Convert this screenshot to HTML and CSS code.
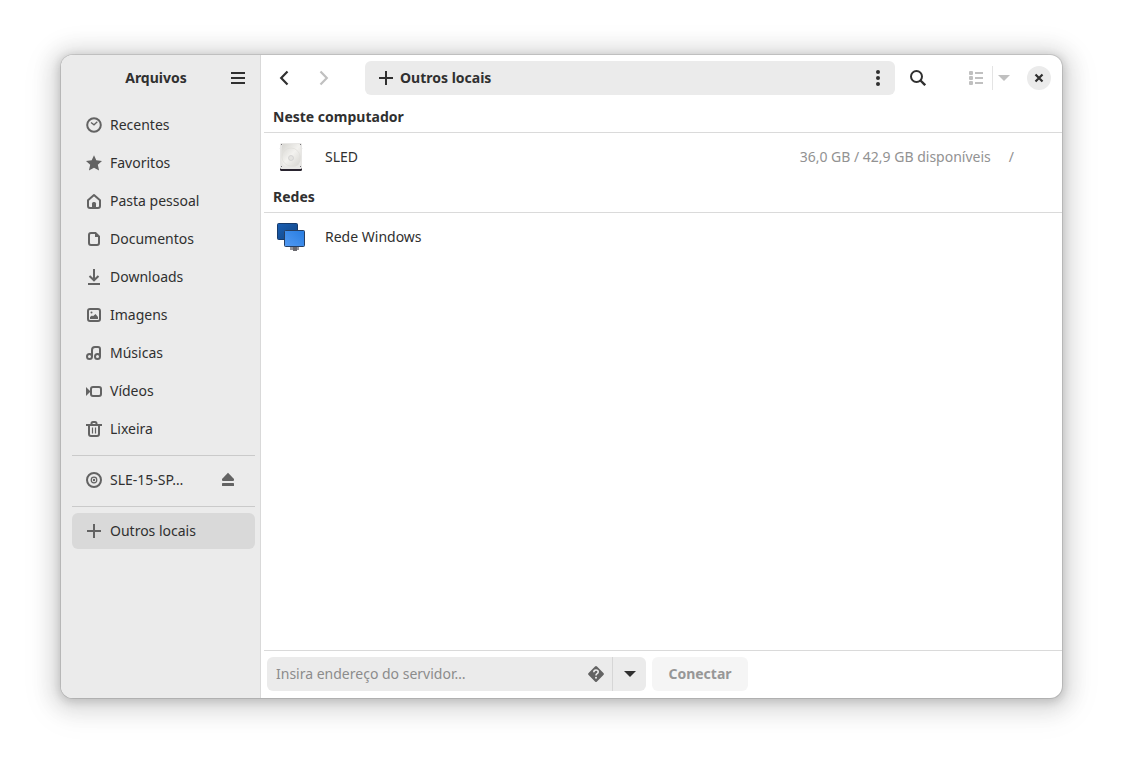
FILE: index.html
```
<!DOCTYPE html>
<html lang="pt-BR">
  <head>
    <meta charset="UTF-8" />
    <meta name="viewport" content="width=device-width, initial-scale=1.0" />
    <title>Arquivos</title>
    <link rel="stylesheet" href="styles.css">
  </head>
  <body>
    <div class="window">
      <!-- Barra lateral -->
      <aside class="sidebar">
        <header class="sidebar-header">
          <h1>Arquivos</h1>
          <button class="icon-btn" aria-label="Menu">
            <svg width="16" height="16" viewBox="0 0 16 16"><path d="M1 3h14M1 8h14M1 13h14" stroke="currentColor" stroke-width="2" /></svg>
          </button>
        </header>
        <nav>
          <ul class="places">
            <li><a href="#">
              <svg width="16" height="16" viewBox="0 0 16 16" fill="none" stroke="currentColor"><circle cx="8" cy="8" r="6.800" stroke-width="2" /><path d="M5 5.500l3 2.300 3.300-3" stroke-width="1.300" /></svg>
              <span>Recentes</span>
            </a></li>
            <li><a href="#">
              <svg width="16" height="16" viewBox="0 0 16 16" fill="currentColor"><path d="M8 .2l2.300 5.100 5.700.6-4.200 3.900 1.300 5.800L8 12.700l-5.100 2.900 1.300-5.800L0 5.900l5.700-.6z" /></svg>
              <span>Favoritos</span>
            </a></li>
            <li><a href="#">
              <svg width="16" height="16" viewBox="0 0 16 16" fill="none" stroke="currentColor" stroke-width="2" stroke-linejoin="round"><path d="M2 7.200L8 2l6 5.200V13q0 2-2 2H4q-2 0-2-2z" /><path d="M6 14v-3.500q0-1.500 1.500-1.500h1q1.500 0 1.500 1.500V14z" fill="currentColor" stroke="none" /></svg>
              <span>Pasta pessoal</span>
            </a></li>
            <li><a href="#">
              <svg width="16" height="16" viewBox="0 0 16 16"><path d="M5 2h4.500L13 5.500V12q0 2-2 2H5q-2 0-2-2V4q0-2 2-2z" fill="none" stroke="currentColor" stroke-width="2" /><path d="M9 2v4h4z" fill="currentColor" /></svg>
              <span>Documentos</span>
            </a></li>
            <li><a href="#">
              <svg width="16" height="16" viewBox="0 0 16 16" fill="none" stroke="currentColor" stroke-width="2"><path d="M8 0v11M3.500 7L8 11.300 12.500 7M2 15h12" /></svg>
              <span>Downloads</span>
            </a></li>
            <li><a href="#">
              <svg width="16" height="16" viewBox="0 0 16 16"><rect x="2" y="2" width="12" height="12" rx="2" fill="none" stroke="currentColor" stroke-width="2" /><path d="M4 12v-2l2-1.500 1 .8L9.500 7 12 10v2z" fill="currentColor" /><circle cx="5.500" cy="5.500" r="1" fill="currentColor" /></svg>
              <span>Imagens</span>
            </a></li>
            <li><a href="#">
              <svg width="16" height="16" viewBox="0 0 16 16" fill="none" stroke="currentColor" stroke-width="2"><circle cx="3.500" cy="11.500" r="2.500" /><circle cx="11.500" cy="11.500" r="2.500" /><path d="M6 11.500V5q0-3 3-3h3q2 0 2 2v7.500" /></svg>
              <span>Músicas</span>
            </a></li>
            <li><a href="#">
              <svg width="16" height="16" viewBox="0 0 16 16"><rect x="5" y="4" width="10" height="9" rx="2" fill="none" stroke="currentColor" stroke-width="2" /><path d="M0 4l4.500 4.500L0 13z" fill="currentColor" /></svg>
              <span>Vídeos</span>
            </a></li>
            <li><a href="#">
              <svg width="16" height="16" viewBox="0 0 16 16" fill="none" stroke="currentColor"><path d="M0 4h16M5.500 4V2.500q0-1.500 1.500-1.500h2q1.500 0 1.500 1.500V4M3 4v9q0 2 2 2h6q2 0 2-2V4" stroke-width="2" /><path d="M6.500 6.500v6M9.500 6.500v6" stroke-width="1.200" /></svg>
              <span>Lixeira</span>
            </a></li>
            <li class="separator"></li>
            <li class="mount">
              <a href="#">
                <svg width="16" height="16" viewBox="0 0 16 16" fill="none" stroke="currentColor"><circle cx="8" cy="8" r="7" stroke-width="2" /><circle cx="8" cy="8" r="2.800" stroke-width="1.200" /><circle cx="8" cy="8" r="1.200" fill="currentColor" stroke="none" /></svg>
                <span>SLE-15-SP…</span>
              </a>
              <button class="eject" aria-label="Ejetar">
                <svg width="16" height="16" viewBox="0 0 16 16" fill="currentColor"><path d="M8 .8L14 7v1q0 1-1 1H3q-1 0-1-1V7z" /><rect x="2" y="11" width="12" height="3" rx=".6" /></svg>
              </button>
            </li>
            <li class="separator"></li>
            <li><a href="#" class="active">
              <svg width="16" height="16" viewBox="0 0 16 16"><path d="M8 1v14M1 8h14" stroke="currentColor" stroke-width="2" /></svg>
              <span>Outros locais</span>
            </a></li>
          </ul>
        </nav>
      </aside>

      <main class="content">
        <!-- Barra de ferramentas -->
        <header class="toolbar">
          <button class="icon-btn" aria-label="Voltar">
            <svg width="16" height="16" viewBox="0 0 16 16"><path d="M11.500 1.500L5.200 8l6.300 6.500" fill="none" stroke="currentColor" stroke-width="2.200" /></svg>
          </button>
          <button class="icon-btn" aria-label="Avançar" disabled>
            <svg width="16" height="16" viewBox="0 0 16 16"><path d="M4.500 1.500L10.800 8l-6.300 6.500" fill="none" stroke="currentColor" stroke-width="2.200" /></svg>
          </button>
          <div class="pathbar">
            <svg width="16" height="16" viewBox="0 0 16 16"><path d="M8 1v14M1 8h14" stroke="currentColor" stroke-width="2" /></svg>
            <span>Outros locais</span>
            <button class="icon-btn" aria-label="Mais opções">
              <svg width="16" height="16" viewBox="0 0 16 16" fill="currentColor"><circle cx="8" cy="2" r="2" /><circle cx="8" cy="8" r="2" /><circle cx="8" cy="14" r="2" /></svg>
            </button>
          </div>
          <button class="icon-btn" aria-label="Pesquisar">
            <svg width="16" height="16" viewBox="0 0 16 16" fill="none" stroke="currentColor"><circle cx="6.500" cy="6.500" r="5.500" stroke-width="2" /><path d="M10.500 10.500l4.700 4.700" stroke-width="2.400" /></svg>
          </button>
          <div class="view-switch">
            <button class="view-list" aria-label="Exibir em lista" disabled>
              <svg width="16" height="16" viewBox="0 0 16 16" fill="currentColor"><rect x="1" y="1" width="4" height="4" rx="1" /><rect x="1" y="6" width="4" height="4" rx="1" /><rect x="1" y="11" width="4" height="4" rx="1" /><path d="M7 2h8v2H7zM7 7h8v2H7zM7 12h8v2H7z" /></svg>
            </button>
            <button class="view-menu" aria-label="Opções de exibição" disabled>
              <svg width="12" height="6" viewBox="0 0 12 6" fill="currentColor"><path d="M0 0h12L6 6z" /></svg>
            </button>
          </div>
          <button class="close" aria-label="Fechar">
            <svg width="10" height="10" viewBox="0 0 10 10"><path d="M1.500 1.500l7 7M8.500 1.500l-7 7" stroke="currentColor" stroke-width="2.200" /></svg>
          </button>
        </header>

        <!-- Locais -->
        <section class="locations">
          <h2>Neste computador</h2>
          <a href="#" class="location">
            <svg width="32" height="32" viewBox="0 0 32 32">
              <defs>
                <linearGradient id="disk" x1="0" y1="0" x2="1" y2="1">
                  <stop offset="0" stop-color="#d4d3cf" />
                  <stop offset=".5" stop-color="#f3f2ef" />
                  <stop offset="1" stop-color="#d3d2ce" />
                </linearGradient>
              </defs>
              <rect x="5" y="6" width="22" height="24" rx="1.500" fill="#29242f" />
              <rect x="5" y="2" width="22" height="26" rx="1.500" fill="#e8e7e5" />
              <path d="M8 3h16q1 0 1 2l1 11q0 10-10 10T6 16L7 5q0-2 1-2z" fill="url(#disk)" />
              <circle cx="16" cy="16" r="9" fill="none" stroke="#dfdeda" stroke-width=".7" />
              <circle cx="16" cy="17" r="2.500" fill="#e5e4e1" stroke="#ccc" stroke-width=".7" />
              <path d="M6 3h1v1H6zM25 3h1v1h-1zM6 25h1v1H6zM25 25h1v1h-1z" fill="#77767b" />
            </svg>
            <span class="name">SLED</span>
            <span class="space">36,0 GB / 42,9 GB disponíveis</span>
            <span class="mount-point">/</span>
          </a>
          <h2>Redes</h2>
          <a href="#" class="location">
            <svg width="32" height="32" viewBox="0 0 32 32">
              <defs>
                <linearGradient id="screen-back" x1="0" y1="0" x2="1" y2="1">
                  <stop offset="0" stop-color="#1a5fb4" />
                  <stop offset="1" stop-color="#124582" />
                </linearGradient>
                <linearGradient id="screen-front" x1="0" y1="1" x2="1" y2="0">
                  <stop offset="0" stop-color="#529af3" />
                  <stop offset="1" stop-color="#277ce0" />
                </linearGradient>
              </defs>
              <rect x="2.500" y="2.500" width="20" height="16" rx="1" fill="url(#screen-back)" stroke="#183b6b" />
              <path d="M17 26h5v3h-5z" fill="#77767b" />
              <path d="M15 26h9v3h-9z" fill="#95949a" />
              <path d="M18 26h4v4h-4z" fill="#6a696e" />
              <rect x="9.500" y="9.500" width="20" height="16" rx="1" fill="url(#screen-front)" stroke="#263e61" />
            </svg>
            <span class="name">Rede Windows</span>
          </a>
        </section>

        <!-- Conexão com servidor -->
        <footer class="connect">
          <div class="server-entry">
            <input type="text" aria-label="Endereço do servidor" placeholder="Insira endereço do servidor…" />
            <button class="help" aria-label="Ajuda">
              <svg width="16" height="16" viewBox="0 0 16 16"><path d="M7 .6q1-1 2 0L15.400 7q1 1 0 2L9 15.400q-1 1-2 0L.6 9q-1-1 0-2z" fill="currentColor" /><path d="M5.800 6.300Q5.800 4 8 4t2.200 2q0 1-1.100 1.700T8 9.500" fill="none" stroke="#ebebeb" stroke-width="1.600" /><circle cx="8" cy="11.700" r="1" fill="#ebebeb" /></svg>
            </button>
            <button class="recent" aria-label="Servidores recentes">
              <svg width="12" height="6" viewBox="0 0 12 6" fill="currentColor"><path d="M0 0h12L6 6z" /></svg>
            </button>
          </div>
          <button class="connect-btn" disabled>Conectar</button>
        </footer>
      </main>
    </div>
  </body>
</html>
```
FILE: styles.css
```
* {
  box-sizing: border-box;
}

body {
  margin: 0;
  min-height: 100vh;
  padding: 55px 61px 67px;
  display: flex;
  background-color: #fff;
  color: #303030;
  font-family: "Noto Sans", "Open Sans", sans-serif;
  font-size: 14px;
  line-height: 20px;
}

h1,
h2 {
  margin: 0;
  font-size: 14px;
  font-weight: bold;
}

a {
  color: inherit;
  text-decoration: none;
}

svg {
  display: block;
  flex-shrink: 0;
}

button {
  display: flex;
  align-items: center;
  justify-content: center;
  padding: 0;
  border: none;
  background: none;
  color: inherit;
  font: inherit;
  cursor: pointer;
}

button:disabled {
  color: #c0c0c0;
  cursor: default;
}

.icon-btn {
  width: 34px;
  height: 34px;
  flex-shrink: 0;
}

.window {
  flex: 1;
  display: flex;
  overflow: hidden;
  border-radius: 12px;
  background-color: #fff;
  box-shadow: 0 0 0 1px rgba(0, 0, 0, 0.1), 0 2px 8px 2px rgba(0, 0, 0, 0.14),
    0 3px 20px 10px rgba(0, 0, 0, 0.11), 0 6px 32px 16px rgba(0, 0, 0, 0.04);
}

/* Barra lateral */
.sidebar {
  width: 200px;
  flex-shrink: 0;
  background-color: #ebebeb;
  border-right: 1px solid #d9d9d9;
}

.sidebar-header {
  display: flex;
  align-items: center;
  height: 46px;
  padding: 0 5px 0 30px;
}

.sidebar-header h1 {
  flex: 1;
  text-align: center;
}

.places {
  display: flex;
  flex-direction: column;
  gap: 2px;
  margin: 0;
  padding: 6px 5px 6px 11px;
  list-style: none;
}

.places a {
  flex: 1;
  display: flex;
  align-items: center;
  gap: 8px;
  height: 36px;
  padding: 0 14px;
  border-radius: 6px;
}

.places a:hover {
  background-color: #e0e0e0;
}

.places a.active {
  background-color: #d9d9d9;
}

.places svg {
  color: #636363;
}

.separator {
  height: 1px;
  margin: 6px 0 4px;
  background-color: #cacaca;
}

.mount {
  display: flex;
  align-items: center;
}

.eject {
  width: 34px;
  height: 34px;
  margin-right: 10px;
}

/* Barra de ferramentas */
.content {
  flex: 1;
  min-width: 0;
  display: flex;
  flex-direction: column;
}

.toolbar {
  display: flex;
  align-items: center;
  gap: 6px;
  height: 46px;
  padding: 0 11px 0 6px;
}

.pathbar {
  flex: 1;
  display: flex;
  align-items: center;
  gap: 6px;
  height: 34px;
  margin-left: 18px;
  padding-left: 13px;
  border-radius: 6px;
  background-color: #ebebeb;
  font-weight: bold;
}

.pathbar .icon-btn {
  margin-left: auto;
}

.view-switch {
  display: flex;
  align-items: center;
  margin: 0 6px 0 19px;
}

.view-list {
  width: 32px;
  height: 34px;
}

.view-menu {
  width: 23px;
  height: 24px;
  border-left: 1px solid #e4e4e4;
}

.close {
  width: 24px;
  height: 24px;
  border-radius: 50%;
  background-color: #ebebeb;
}

/* Locais */
.locations {
  flex: 1;
  padding-left: 3px;
}

.locations h2 {
  height: 32px;
  padding: 6px 9px 5px;
  border-bottom: 1px solid #dadada;
}

.location {
  display: flex;
  align-items: center;
  height: 48px;
  padding: 0 48px 0 11px;
}

.location .name {
  margin-left: 18px;
}

.space {
  margin-left: auto;
  color: #929292;
}

.mount-point {
  margin-left: 18px;
  color: #929292;
}

/* Conexão com servidor */
.connect {
  display: flex;
  gap: 6px;
  margin-left: 3px;
  padding: 6px 3px 7px;
  border-top: 1px solid #dadada;
}

.server-entry {
  display: flex;
  width: 379px;
  height: 34px;
  overflow: hidden;
  border-radius: 6px;
  background-color: #ebebeb;
}

.server-entry input {
  flex: 1;
  min-width: 0;
  padding: 0 9px;
  border: none;
  outline: none;
  background: none;
  color: inherit;
  font: inherit;
}

.server-entry input::placeholder {
  color: #8c8c8c;
  opacity: 1;
}

.help {
  width: 32px;
  color: #636363;
}

.recent {
  width: 34px;
  border-left: 1px solid #d6d6d6;
}

.connect-btn {
  width: 96px;
  height: 34px;
  border-radius: 6px;
  background-color: #f5f5f5;
  font-weight: bold;
}

.connect-btn:disabled {
  color: #979797;
}
```
